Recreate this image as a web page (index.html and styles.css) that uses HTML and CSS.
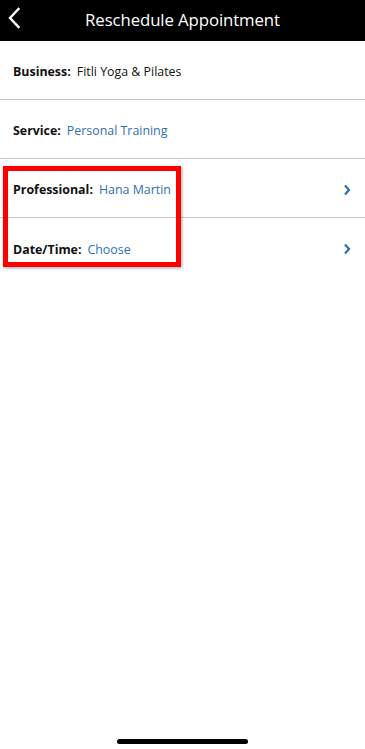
FILE: index.html
```html
<!DOCTYPE html>
<html>
<head>
<meta charset="utf-8">
<link rel="stylesheet" href="styles.css">
</head>
<body>
<div class="screen">
  <header class="topbar">
    <svg class="back" width="14" height="22" viewBox="0 0 14 22"><path d="M11.5 2 L3 11 L11.5 20" fill="none" stroke="#fff" stroke-width="2.4" stroke-linecap="square"/></svg>
    <h1 class="title">Reschedule Appointment</h1>
  </header>
  <div class="list">
    <div class="row"><span class="label">Business:</span><span class="value plain">Fitli Yoga &amp; Pilates</span></div>
    <div class="row"><span class="label">Service:</span><span class="value">Personal Training</span></div>
    <div class="row"><span class="label">Professional:</span><span class="value">Hana Martin</span>
      <svg class="chev" width="8" height="12" viewBox="0 0 8 12"><path d="M2 1.5 L6 6 L2 10.5" fill="none" stroke="#2f6fb3" stroke-width="2.2"/></svg></div>
    <div class="row last"><span class="label">Date/Time:</span><span class="value">Choose</span>
      <svg class="chev" width="8" height="12" viewBox="0 0 8 12"><path d="M2 1.5 L6 6 L2 10.5" fill="none" stroke="#2f6fb3" stroke-width="2.2"/></svg></div>
    <div class="highlight"></div>
  </div>
  <div class="home"></div>
</div>
</body>
</html>
```
FILE: styles.css
```css
* { box-sizing: border-box; }
html, body { margin: 0; padding: 0; background: #fff; }
body { font-family: "Open Sans", "DejaVu Sans", sans-serif; }
.screen { position: relative; width: 365px; height: 749px; overflow: hidden; background: #fff; }
.topbar { height: 41px; background: #000; position: relative; display: flex; align-items: center; justify-content: center; }
.back { position: absolute; left: 7px; top: 7px; }
.title { margin: 0; color: #fff; font-weight: 400; font-size: 16.8px; letter-spacing: -0.1px; line-height: 1; }
.list { position: relative; }
.row { height: 59px; border-bottom: 1px solid #c8c8c8; display: flex; align-items: center; padding: 3px 13px 0 13px; font-size: 12.4px; }
.row.last { border-bottom: none; }
.label { font-weight: 700; color: #111; margin-right: 6px; }
.value { color: #2f6fb3; }
.value.plain { color: #111; }
.chev { margin-left: auto; margin-right: 1px; }
.highlight { position: absolute; left: 3px; top: 125px; width: 178px; height: 101px; border: 5px solid #f00; box-shadow: 1px 1px 3px rgba(0,0,0,0.35); }
.home { position: absolute; left: 117px; bottom: 5px; width: 131px; height: 5px; border-radius: 3px; background: #000; }
```
